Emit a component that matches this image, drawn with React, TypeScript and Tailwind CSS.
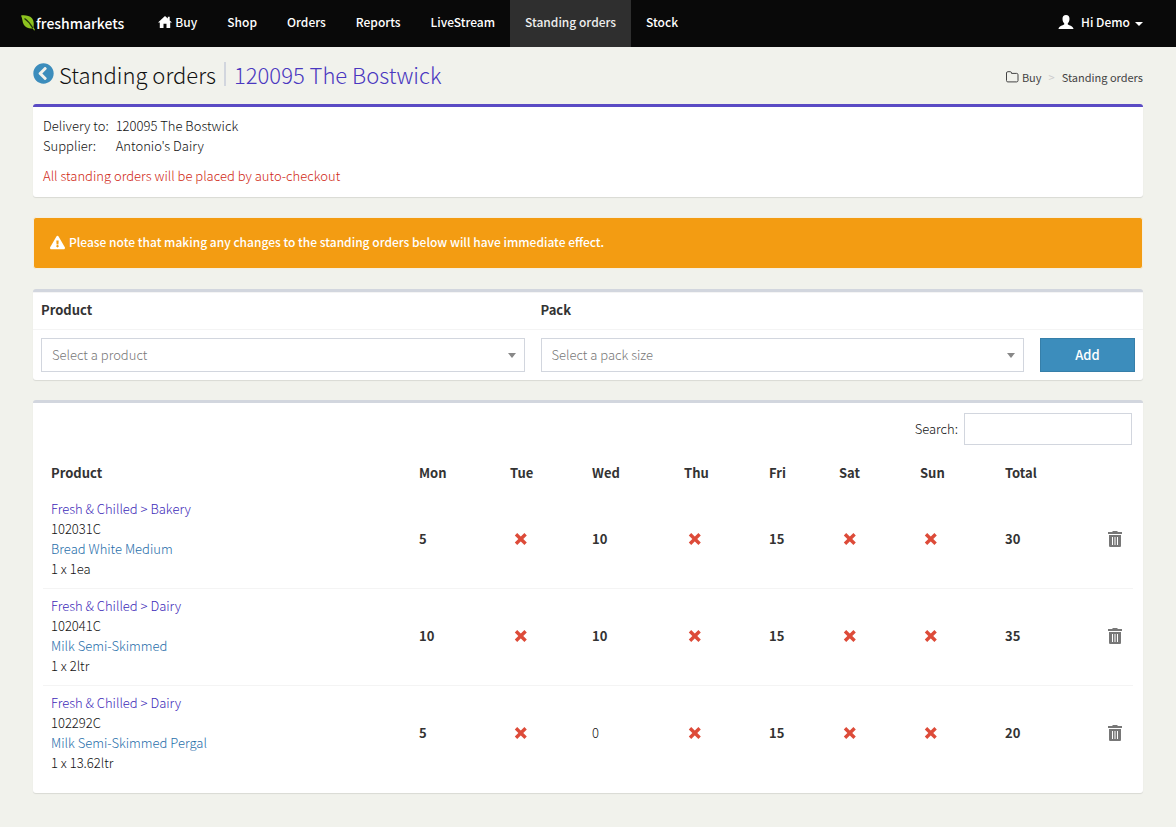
import type { ReactNode } from "react";
import { FaChevronCircleLeft, FaExclamationTriangle } from "react-icons/fa";

type Quantity = number | null;

interface StandingOrder {
  category: string;
  code: string;
  name: string;
  pack: string;
  days: Quantity[];
}

const DAYS = ["Mon", "Tue", "Wed", "Thu", "Fri", "Sat", "Sun"];

const NAV_ITEMS = ["Buy", "Shop", "Orders", "Reports", "LiveStream", "Standing orders", "Stock"];

const ORDERS: StandingOrder[] = [
  {
    category: "Fresh & Chilled > Bakery",
    code: "102031C",
    name: "Bread White Medium",
    pack: "1 x 1ea",
    days: [5, null, 10, null, 15, null, null],
  },
  {
    category: "Fresh & Chilled > Dairy",
    code: "102041C",
    name: "Milk Semi-Skimmed",
    pack: "1 x 2ltr",
    days: [10, null, 10, null, 15, null, null],
  },
  {
    category: "Fresh & Chilled > Dairy",
    code: "102292C",
    name: "Milk Semi-Skimmed Pergal",
    pack: "1 x 13.62ltr",
    days: [5, null, 0, null, 15, null, null],
  },
];

const LeafLogo = () => (
  <svg viewBox="0 0 14 16" className="h-4 w-[14px]" aria-hidden="true">
    <path d="M0 .5C4 0 8.500.5 11 3.200c2 2.300 2 5.800 1.500 9l1.500 2.900-.9.500-1.300-2.200C8 13.800 4.300 12.600 2.700 9.600 1.300 7 1.500 3.200 0 .5z" fill="#8dc21f" />
    <path d="M3.500 3.500c3 2 6 5.500 8.300 9.500" stroke="#23350a" strokeWidth="1.300" fill="none" />
  </svg>
);

const HomeIcon = () => (
  <svg viewBox="0 0 14 12" className="h-3 w-[14px]" fill="currentColor" aria-hidden="true">
    <path d="M7 0 0 6.600h1.800V12h3.700V7.700h3V12h3.700V6.600H14l-2.300-2.200V.8H9.800v1.800z" />
  </svg>
);

const UserIcon = () => (
  <svg viewBox="0 0 16 14" className="h-[14px] w-4" fill="currentColor" aria-hidden="true">
    <path d="M8 0c2.300 0 3.500 1.500 3.500 3.800 0 1.900-.7 3.600-1.700 4.500v1.100c1.500.9 5.400 1.500 5.700 4.600H.5c.3-3.100 4.200-3.700 5.700-4.600V8.300c-1-.9-1.700-2.600-1.700-4.500C4.500 1.500 5.700 0 8 0z" />
  </svg>
);

const FolderIcon = () => (
  <svg viewBox="0 0 13 12" className="h-3 w-[13px]" fill="none" stroke="currentColor" aria-hidden="true">
    <path d="M.5 2c0-.8.500-1.300 1.300-1.300h2.500c.8 0 1.200.5 1.200 1.300v.4h5.200c.8 0 1.300.5 1.300 1.300v5.900c0 .8-.5 1.300-1.300 1.300H1.800c-.8 0-1.300-.5-1.300-1.300z" />
  </svg>
);

const CrossIcon = () => (
  <svg viewBox="0 0 14 12" className="h-3 w-[14px]" role="img" aria-label="None">
    <path d="M2 1.200l9.600 9.600M11.600 1.200l-9.600 9.600" stroke="#dd4b39" strokeWidth="3.400" />
  </svg>
);

const TrashIcon = () => (
  <svg viewBox="0 0 14 16" className="h-4 w-[14px]" aria-hidden="true">
    <path d="M4.500 0h5v1H14v2H0V1h4.500z" fill="#777" />
    <path d="M1 4h12v10.500c0 1-.5 1.500-1.500 1.500h-9C1.500 16 1 15.500 1 14.500z" fill="#777" />
    <path d="M4.500 6v8M7 6v8M9.500 6v8" stroke="#fff" />
  </svg>
);

const Card = ({ accent, children }: { accent?: boolean; children: ReactNode }) => (
  <section
    className={`mb-5 rounded-[3px] border-t-3 bg-white shadow-[0_1px_1px_rgba(0,0,0,0.1)] ${
      accent ? "border-[#5a4bc4]" : "border-[#d2d6de]"
    }`}
  >
    {children}
  </section>
);

const SelectBox = ({ id, placeholder }: { id: string; placeholder: string }) => (
  <div className="relative">
    <select
      id={id}
      className="block h-[34px] w-full appearance-none border border-[#d2d6de] bg-white px-[10px] text-[#777]"
    >
      <option>{placeholder}</option>
    </select>
    <span className="pointer-events-none absolute top-[15px] right-[9px] border-x-4 border-t-5 border-x-transparent border-t-[#888]" />
  </div>
);

const TopNav = () => (
  <header className="flex h-[47px] items-center bg-[#090909] pr-[33px] pl-[21px] text-xs font-medium text-white">
    <a href="#" className="mr-[19px] flex items-center pb-[2px] text-sm">
      <LeafLogo />
      <span className="ml-px">freshmarkets</span>
    </a>
    <nav className="flex h-full">
      {NAV_ITEMS.map((item) => (
        <a
          key={item}
          href="#"
          className={`flex h-full items-center gap-[3px] px-[15px] pb-[3px] ${
            item === "Standing orders" ? "bg-[#2f2f2f] text-[#eee]" : ""
          }`}
        >
          {item === "Buy" && <HomeIcon />}
          {item}
        </a>
      ))}
    </nav>
    <button type="button" className="ml-auto flex items-center pb-[3px]">
      <UserIcon />
      <span className="mr-[5px] ml-[7px]">Hi Demo</span>
      <span className="mt-[3px] border-x-4 border-t-4 border-x-transparent border-t-white" />
    </button>
  </header>
);

const PageHeading = () => (
  <div className="flex h-[57px] items-center justify-between">
    <h1 className="flex items-center pb-1 text-[22px] leading-6">
      <a href="#" aria-label="Back" className="mr-[5px] text-[#3c8dbc]">
        <FaChevronCircleLeft size={21} />
      </a>
      Standing orders
      <span className="mx-2 h-6 w-[2px] bg-[#d2d6de]" />
      <span className="text-[#4a38c0]">120095 The Bostwick</span>
    </h1>
    <nav aria-label="Breadcrumb" className="flex items-center pt-[2px] text-[11px] font-normal text-[#444]">
      <a href="#" className="flex items-center gap-[3px]">
        <FolderIcon />
        Buy
      </a>
      <span className="px-[7px] text-[#ccc]">&gt;</span>
      <span>Standing orders</span>
    </nav>
  </div>
);

const OrdersTable = () => (
  <table className="w-full table-fixed text-left">
    <colgroup>
      <col />
      <col className="w-[91px]" />
      <col className="w-[82px]" />
      <col className="w-[92px]" />
      <col className="w-[85px]" />
      <col className="w-[70px]" />
      <col className="w-[81px]" />
      <col className="w-[85px]" />
      <col className="w-[90px]" />
      <col className="w-[46px]" />
    </colgroup>
    <thead className="text-[#333]">
      <tr>
        <th className="p-2">Product</th>
        {DAYS.map((day) => (
          <th key={day} className="p-2">
            {day}
          </th>
        ))}
        <th className="p-2">Total</th>
        <th className="p-2" />
      </tr>
    </thead>
    <tbody>
      {ORDERS.map((order) => (
        <tr key={order.code} className="border-t border-[#f4f4f4] first:border-transparent">
          <td className="px-2 pt-[7px] pb-[9px]">
            <a href="#" className="block text-[#3d2ab8]">
              {order.category}
            </a>
            <div>{order.code}</div>
            <a href="#" className="block text-[#1f6eaa]">
              {order.name}
            </a>
            <div>{order.pack}</div>
          </td>
          {order.days.map((qty, i) => (
            <td key={DAYS[i]} className={`px-2 pt-[7px] pb-[9px] ${qty ? "font-bold text-[#333]" : ""}`}>
              {qty === null ? (
                <span className="block pl-1">
                  <CrossIcon />
                </span>
              ) : (
                qty
              )}
            </td>
          ))}
          <td className="px-2 pt-[7px] pb-[9px] font-bold text-[#333]">
            {order.days.reduce<number>((sum, qty) => sum + (qty ?? 0), 0)}
          </td>
          <td className="px-2 pt-[7px] pb-[9px]">
            <button type="button" aria-label={`Remove ${order.name}`} className="ml-auto block pr-[3px]">
              <TrashIcon />
            </button>
          </td>
        </tr>
      ))}
    </tbody>
  </table>
);

export default function App() {
  return (
    <div className="min-h-screen bg-[#f1f2ec] font-['Noto_Sans_CJK_JP','Noto_Sans',sans-serif] text-[13px] leading-5 font-light text-[#111]">
      <TopNav />
      <main className="px-[33px]">
        <PageHeading />

        <Card accent>
          <div className="px-[10px] pt-[9px] pb-[11px]">
            <dl className="grid grid-cols-[auto_1fr] gap-x-[7px]">
              <dt>Delivery to:</dt>
              <dd>120095 The Bostwick</dd>
              <dt>Supplier:</dt>
              <dd>Antonio's Dairy</dd>
            </dl>
            <p className="mt-[10px] text-[#d02814]">All standing orders will be placed by auto-checkout</p>
          </div>
        </Card>

        <div
          role="alert"
          className="mb-5 flex items-center gap-1 rounded-[3px] border border-[#f5efe0] bg-[#f39c12] px-4 pt-[14px] pb-4 text-xs leading-5 font-medium text-white"
        >
          <FaExclamationTriangle size={15} />
          Please note that making any changes to the standing orders below will have immediate effect.
        </div>

        <Card>
          <div className="grid grid-cols-[1fr_1fr_95px] gap-x-4 border-y border-[#f4f4f4] px-2 pt-[7px] pb-[9px] font-bold text-[#333]">
            <label htmlFor="product">Product</label>
            <label htmlFor="pack">Pack</label>
          </div>
          <div className="grid grid-cols-[1fr_1fr_95px] gap-x-4 p-2">
            <SelectBox id="product" placeholder="Select a product" />
            <SelectBox id="pack" placeholder="Select a pack size" />
            <button type="button" className="h-[34px] border border-[#367fa9] bg-[#3c8dbc] font-medium text-white">
              Add
            </button>
          </div>
        </Card>

        <Card>
          <div className="px-[10px] pt-[10px] pb-[11px]">
            <div className="mb-[10px] flex items-center justify-end gap-[6px] pr-px">
              <label htmlFor="search">Search:</label>
              <input id="search" type="search" className="h-8 w-[168px] border border-[#d2d6de] bg-white px-[10px]" />
            </div>
            <OrdersTable />
          </div>
        </Card>
      </main>
    </div>
  );
}
